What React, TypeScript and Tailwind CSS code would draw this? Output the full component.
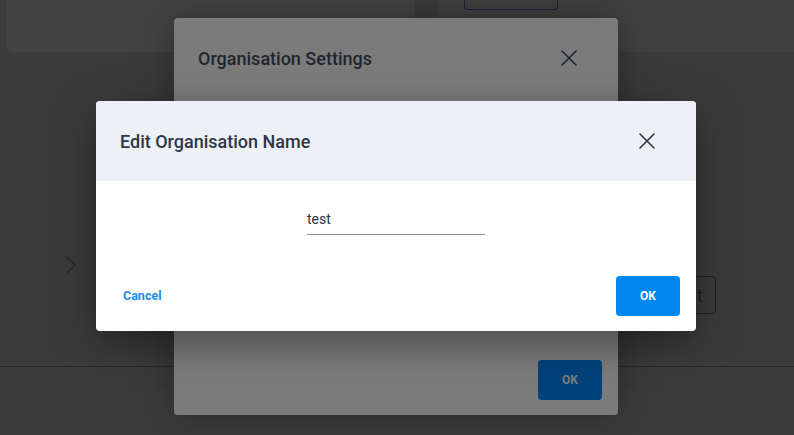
import React from "react";

function XIcon({ className }: { className?: string }) {
  return (
    <svg viewBox="0 0 24 24" className={className} fill="none" stroke="currentColor" strokeWidth={1.6} strokeLinecap="round">
      <path d="M5 5L19 19M19 5L5 19" />
    </svg>
  );
}

export default function App() {
  return (
    <div
      className="relative w-[794px] h-[435px] overflow-hidden bg-[#3b3b3b]"
      style={{ fontFamily: "Roboto, 'Noto Sans', sans-serif" }}
    >
      {/* underlying page (dimmed) */}
      <div className="flex flex-col h-full">
        <div className="flex gap-[23px] h-[52px] pl-[6px]">
          <div className="w-[409px] h-full rounded-b-[8px] bg-[#434343]" />
          <div className="flex-1 h-full rounded-bl-[8px] bg-[#414141] pl-[26px]">
            <div className="w-[94px] h-[10px] rounded-b-[4px] border border-t-0 border-[#1b2233]" />
          </div>
        </div>
        <div className="flex-1 flex flex-col">
          <div className="flex-1 flex items-start justify-between pl-[65px] pr-[78px] pt-[203px]">
            <svg viewBox="0 0 12 20" className="w-[12px] h-[20px] text-[#252a33]" fill="none" stroke="currentColor" strokeWidth={1.5}>
              <path d="M2 2L10 10L2 18" />
            </svg>
            <div className="mt-[21px] w-[60px] h-[38px] rounded-[4px] border border-[#1b2233] flex items-center justify-end pr-[12px] text-[18px] text-[#1b2233]">
              t
            </div>
          </div>
          <div className="h-[69px] border-t border-[#2a2a2a] bg-[#3c3c3c]" />
        </div>
      </div>

      {/* Organisation Settings modal (behind) */}
      <div className="absolute left-[174px] top-[18px] w-[444px] h-[397px] rounded-[4px] bg-[#7b7b7b] shadow-[0_0_40px_rgba(0,0,0,0.35)] flex flex-col">
        <div className="flex items-center justify-between h-[80px] pl-[24px] pr-[37px]">
          <span className="text-[18px] font-medium text-[#1f2530]">Organisation Settings</span>
          <XIcon className="w-[24px] h-[24px] text-[#1f2530]" />
        </div>
        <div className="flex-1" />
        <div className="flex justify-end pr-[16px] pb-[15px]">
          <div className="w-[64px] h-[40px] rounded-[4px] bg-[#00427a] flex items-center justify-center text-[12px] font-bold text-[#7e7e7e]">
            OK
          </div>
        </div>
      </div>

      {/* Edit Organisation Name modal */}
      <div className="absolute left-[96px] top-[101px] w-[600px] h-[230px] rounded-[4px] bg-white overflow-hidden shadow-[0_12px_40px_rgba(0,0,0,0.4)] flex flex-col">
        <div className="h-[80px] bg-[#edf1f5] flex items-center justify-between pl-[24px] pr-[37px]">
          <span className="text-[18px] font-medium text-[#2d3748]">Edit Organisation Name</span>
          <XIcon className="w-[24px] h-[24px] text-[#2d3748]" />
        </div>
        <div className="flex justify-center pt-[28px]">
          <div className="w-[178px] h-[26px] border-b border-[#8f8f8f] text-[14px] text-[#2d3748] leading-[20px]">
            test
          </div>
        </div>
        <div className="flex-1 flex items-end justify-between pl-[27px] pr-[16px] pb-[15px]">
          <span className="text-[12.5px] font-bold text-[#1a8cf0] mb-[10px]">Cancel</span>
          <div className="w-[64px] h-[40px] rounded-[4px] bg-[#0088f2] flex items-center justify-center text-[12px] font-bold text-white">
            OK
          </div>
        </div>
      </div>
    </div>
  );
}
